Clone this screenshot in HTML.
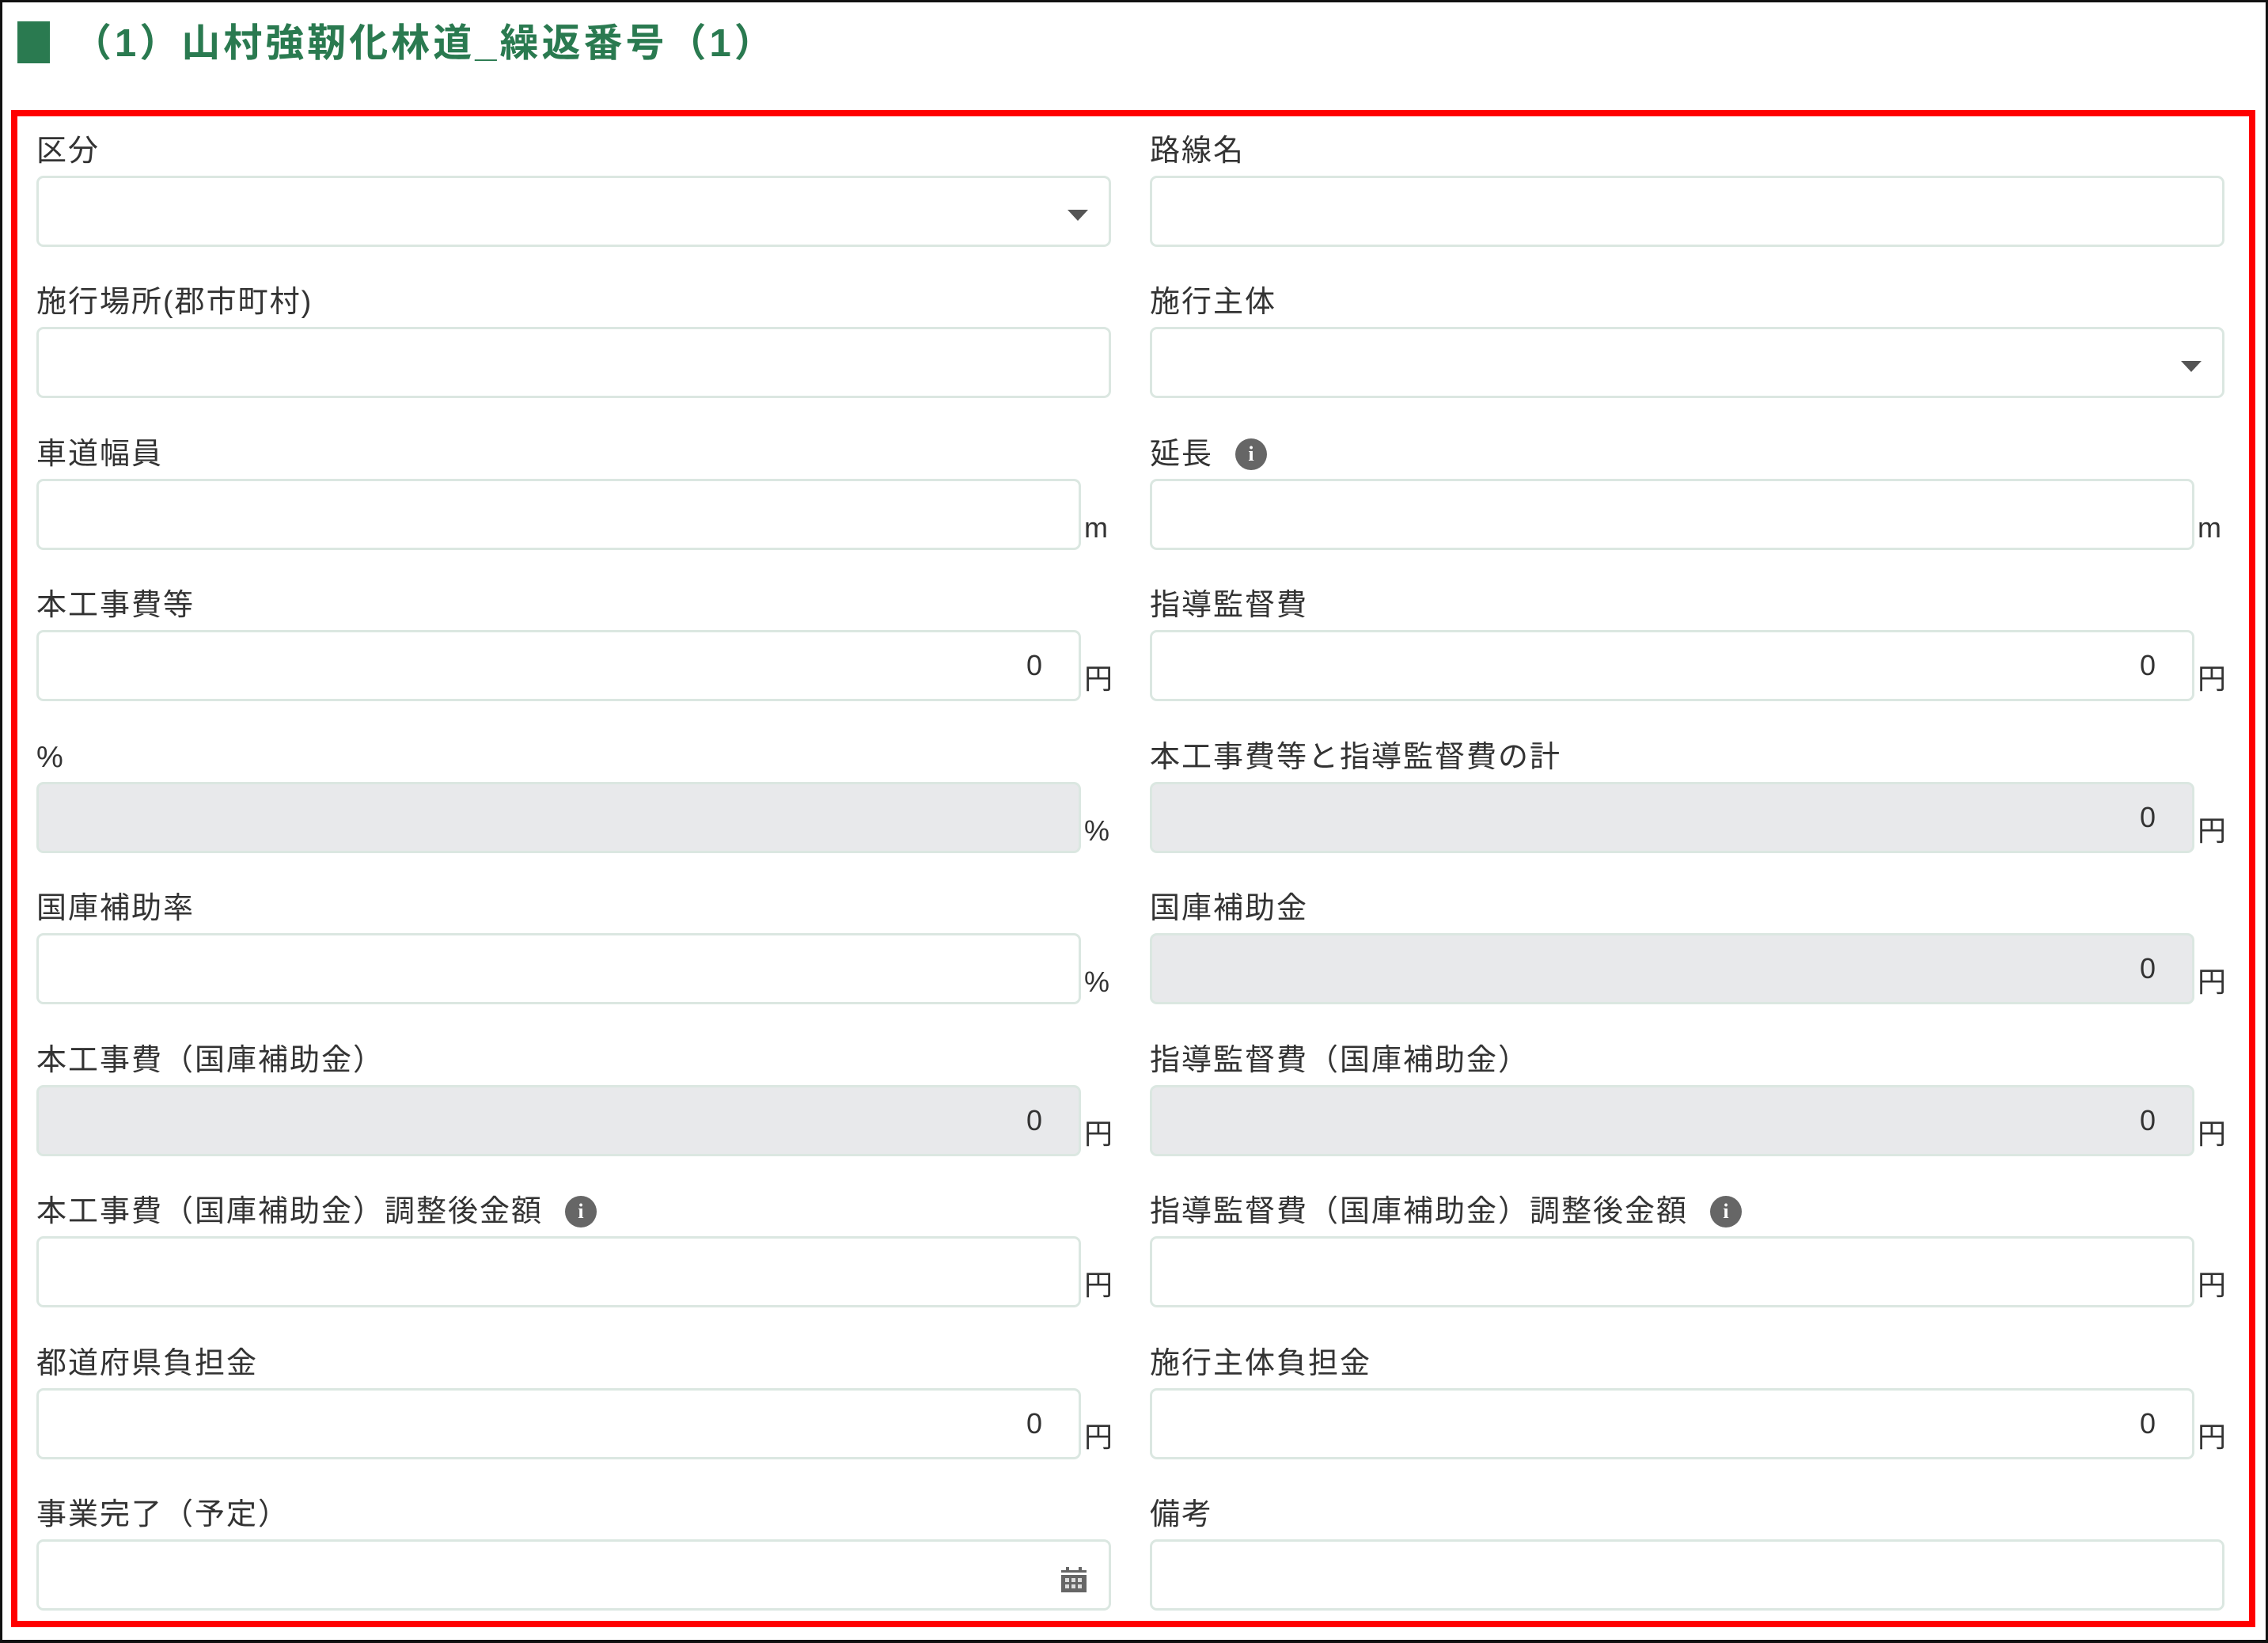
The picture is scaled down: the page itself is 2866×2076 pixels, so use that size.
<!DOCTYPE html>
<html><head><meta charset="utf-8"><style>
*{margin:0;padding:0;box-sizing:border-box}
body{width:2866px;height:2076px;background:#fff;position:relative;overflow:hidden;font-family:"Liberation Sans","Noto Sans CJK JP",sans-serif;color:#333}
.frame{position:absolute;left:0;top:0;width:2866px;height:2076px;border:3px solid #111;border-bottom-width:4px}
.sq{position:absolute;left:22px;top:27px;width:41px;height:53px;background:#2a7a50}
.title{position:absolute;left:92px;top:20px;font-size:49px;font-weight:bold;color:#2a7a50;line-height:70px;white-space:nowrap;letter-spacing:4px}
.red{position:absolute;left:14px;top:139px;width:2836px;height:1917px;border:8px solid #f00}
.row{position:absolute;left:0;width:2866px;height:160px}
.lab{position:absolute;top:2px;font-size:38px;line-height:50px;white-space:nowrap;color:#333;letter-spacing:2px}
.inp{position:absolute;top:58px;height:90px;border:3px solid #dbe7e1;border-radius:9px;background:#fff}
.g{background:#e8e9eb}
.L{left:46px}.R{left:1453px}
.wf{width:1358px}.wu{width:1320px}
.val{position:absolute;right:46px;top:20px;font-size:36px;line-height:44px;color:#333}
.unit{position:absolute;top:96px;font-size:36px;line-height:48px;color:#333}
.uL{left:1370px}.uR{left:2777px}
.arr{position:absolute;right:26px;top:40px;width:0;height:0;border-left:13px solid transparent;border-right:13px solid transparent;border-top:14px solid #555}
.info{display:inline-block;width:40px;height:40px;border-radius:50%;background:#666;color:#fff;font-size:26px;font-weight:bold;line-height:40px;text-align:center;vertical-align:4px;margin-left:28px;font-family:"Liberation Serif",serif;letter-spacing:0}
</style></head><body>
<div class="frame"></div>
<div class="sq"></div>
<div class="title">（1）山村強靭化林道_繰返番号（1）</div>
<div class="red"></div>

<div class="row" style="top:164px">
<div class="lab L">区分</div><div class="inp L wf"><div class="arr"></div></div>
<div class="lab R">路線名</div><div class="inp R wf"></div>
</div>

<div class="row" style="top:355px">
<div class="lab L">施行場所(郡市町村)</div><div class="inp L wf"></div>
<div class="lab R">施行主体</div><div class="inp R wf"><div class="arr"></div></div>
</div>

<div class="row" style="top:547px">
<div class="lab L">車道幅員</div><div class="inp L wu"></div><div class="unit uL">m</div>
<div class="lab R">延長<span class="info">i</span></div><div class="inp R wu"></div><div class="unit uR">m</div>
</div>

<div class="row" style="top:738px">
<div class="lab L">本工事費等</div><div class="inp L wu"><div class="val">0</div></div><div class="unit uL">円</div>
<div class="lab R">指導監督費</div><div class="inp R wu"><div class="val">0</div></div><div class="unit uR">円</div>
</div>

<div class="row" style="top:930px">
<div class="lab L">%</div><div class="inp L wu g"></div><div class="unit uL">%</div>
<div class="lab R">本工事費等と指導監督費の計</div><div class="inp R wu g"><div class="val">0</div></div><div class="unit uR">円</div>
</div>

<div class="row" style="top:1121px">
<div class="lab L">国庫補助率</div><div class="inp L wu"></div><div class="unit uL">%</div>
<div class="lab R">国庫補助金</div><div class="inp R wu g"><div class="val">0</div></div><div class="unit uR">円</div>
</div>

<div class="row" style="top:1313px">
<div class="lab L">本工事費（国庫補助金）</div><div class="inp L wu g"><div class="val">0</div></div><div class="unit uL">円</div>
<div class="lab R">指導監督費（国庫補助金）</div><div class="inp R wu g"><div class="val">0</div></div><div class="unit uR">円</div>
</div>

<div class="row" style="top:1504px">
<div class="lab L">本工事費（国庫補助金）調整後金額<span class="info">i</span></div><div class="inp L wu"></div><div class="unit uL">円</div>
<div class="lab R">指導監督費（国庫補助金）調整後金額<span class="info">i</span></div><div class="inp R wu"></div><div class="unit uR">円</div>
</div>

<div class="row" style="top:1696px">
<div class="lab L">都道府県負担金</div><div class="inp L wu"><div class="val">0</div></div><div class="unit uL">円</div>
<div class="lab R">施行主体負担金</div><div class="inp R wu"><div class="val">0</div></div><div class="unit uR">円</div>
</div>

<div class="row" style="top:1887px">
<div class="lab L">事業完了（予定）</div><div class="inp L wf">
<svg style="position:absolute;right:26px;top:30px" width="36" height="36" viewBox="0 0 36 36"><rect x="2" y="6" width="32" height="28" fill="#666"/><rect x="8" y="2" width="4" height="8" fill="#666"/><rect x="24" y="2" width="4" height="8" fill="#666"/><rect x="2" y="9" width="32" height="3" fill="#fff"/><g fill="#ddd"><rect x="7" y="16" width="5" height="5"/><rect x="15" y="16" width="5" height="5"/><rect x="23" y="16" width="5" height="5"/><rect x="7" y="24" width="5" height="5"/><rect x="15" y="24" width="5" height="5"/><rect x="23" y="24" width="5" height="5"/></g></svg>
</div>
<div class="lab R">備考</div><div class="inp R wf"></div>
</div>
</body></html>
